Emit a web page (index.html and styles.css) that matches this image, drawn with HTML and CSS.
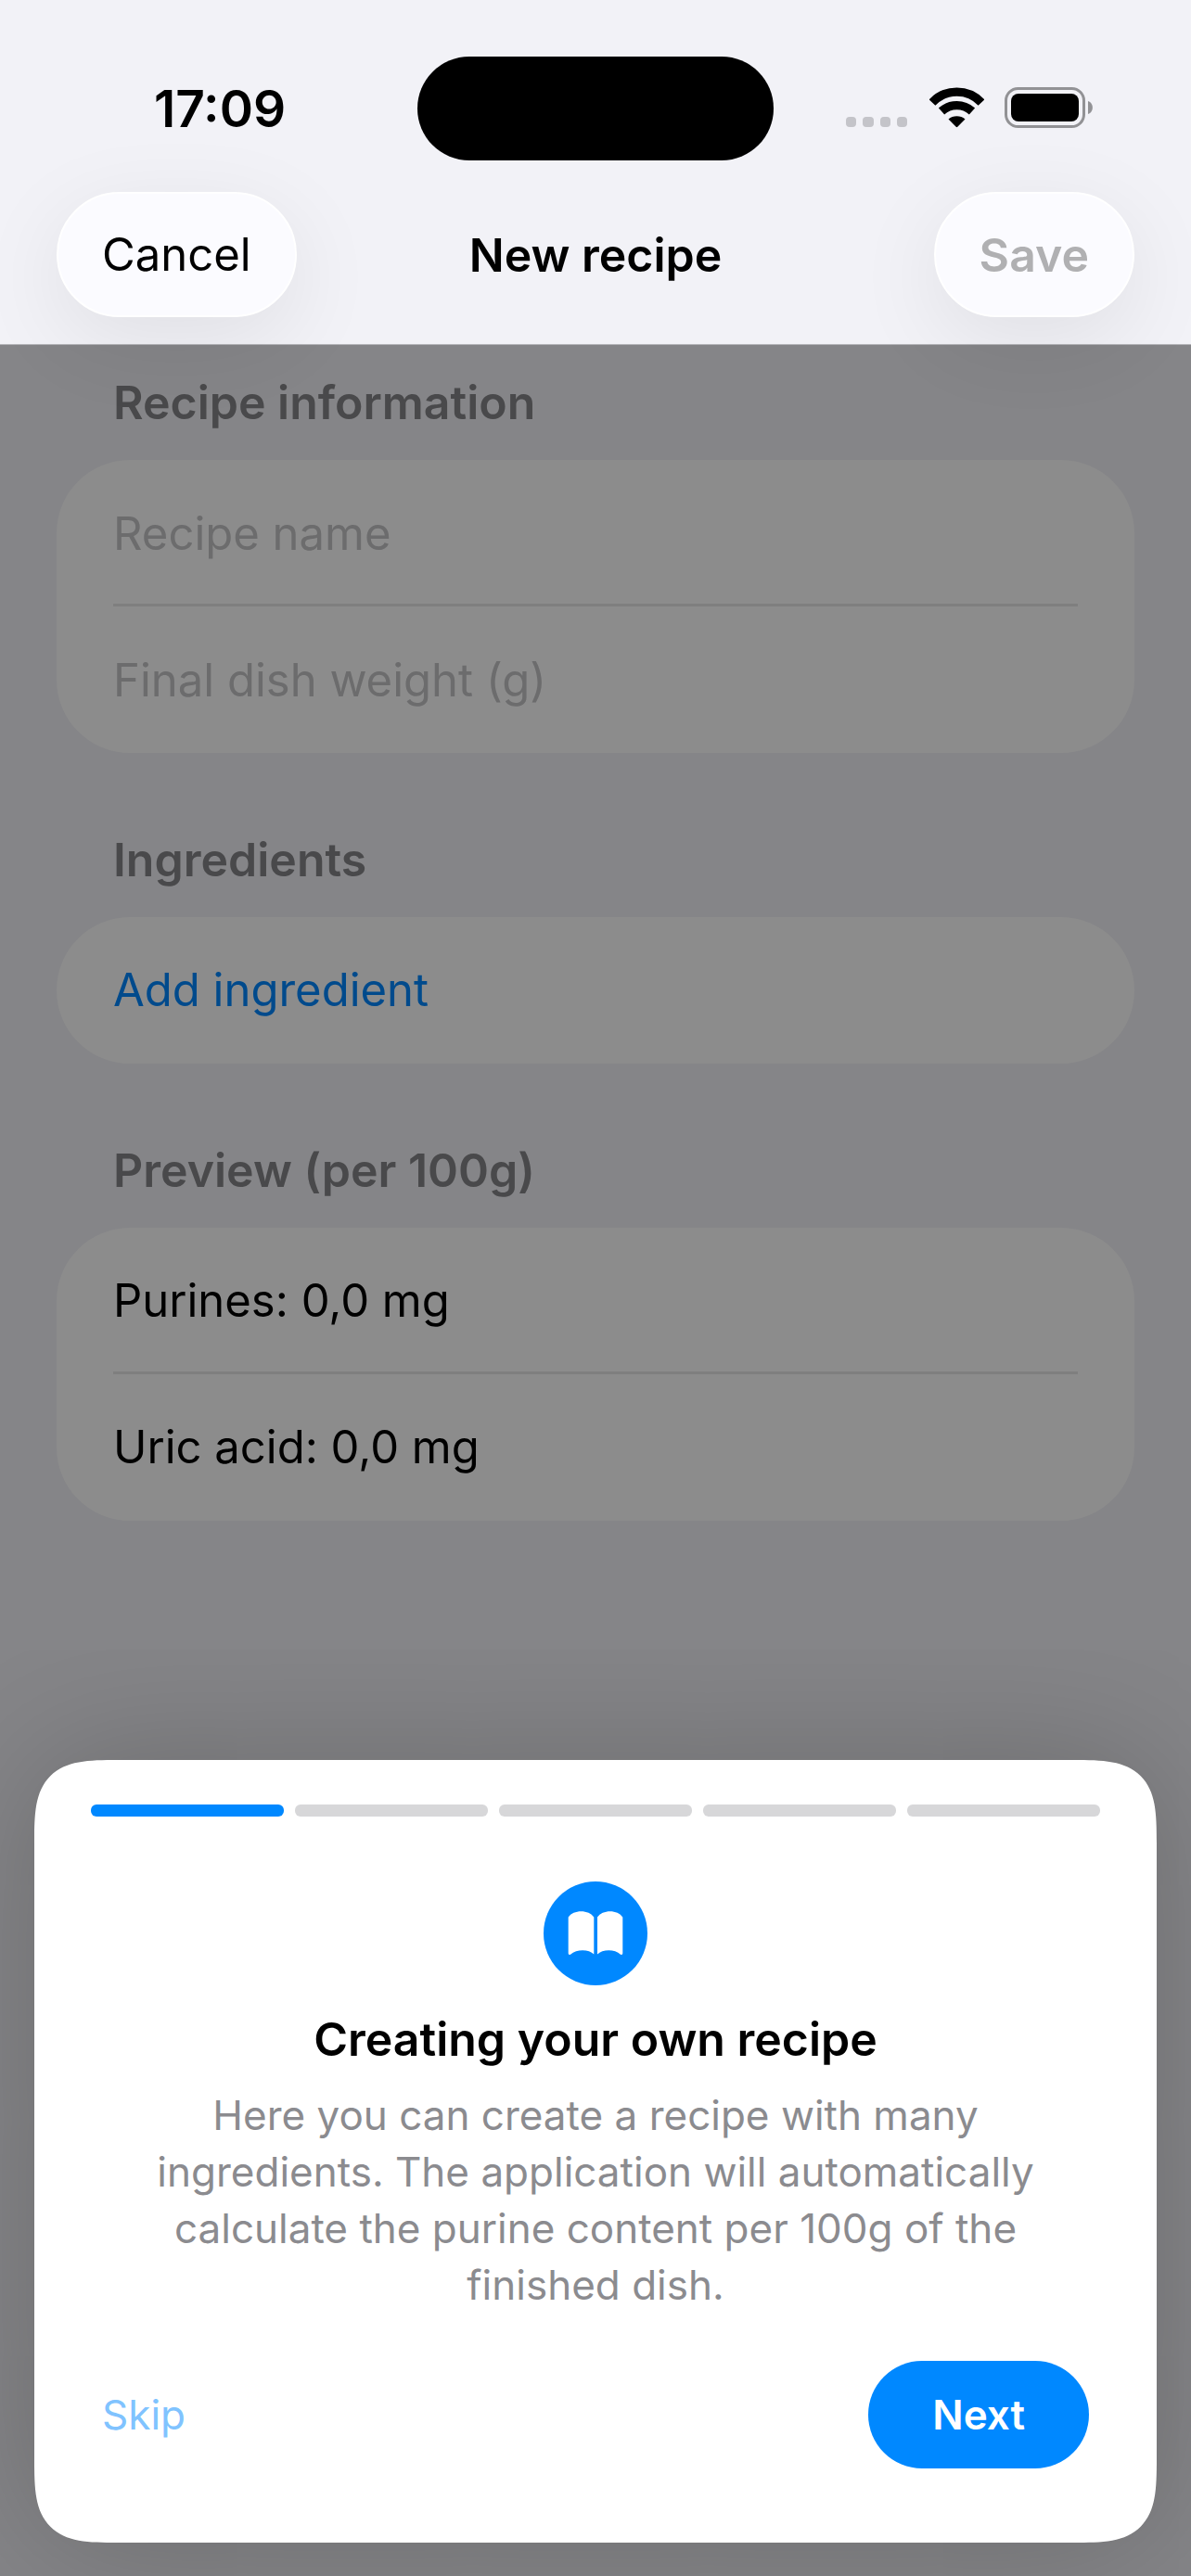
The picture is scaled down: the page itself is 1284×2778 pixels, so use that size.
FILE: index.html
```html
<!DOCTYPE html>
<html lang="en">
<head>
    <meta charset="UTF-8">
    <meta name="viewport" content="width=device-width, initial-scale=1.0">
    <title>New recipe</title>
    <link rel="stylesheet" href="styles.css">
</head>
<body>
    <header class="header">
        <div class="status-bar">
            <time class="status-time">17:09</time>
            <div class="island"></div>
            <div class="status-icons">
                <svg class="icon-signal" width="67" height="44" viewBox="0 0 67 44" fill="#c4c4c9" aria-hidden="true">
                    <rect x="0" y="32" width="11" height="11" rx="4"/>
                    <rect x="18" y="32" width="12" height="11" rx="4"/>
                    <rect x="37" y="32" width="11" height="11" rx="4"/>
                    <rect x="55" y="32" width="11" height="11" rx="4"/>
                </svg>
                <svg class="icon-wifi" width="59" height="44" viewBox="0 0 59 44" aria-hidden="true">
                    <path d="M3 16.500A36.500 36.500 0 0 1 56 16.500" fill="none" stroke="#000" stroke-width="9.300"/>
                    <path d="M13 26A24.500 24.500 0 0 1 46 26" fill="none" stroke="#000" stroke-width="9.300"/>
                    <path d="M20.500 34.500A14 14 0 0 1 38.500 34.500L30.300 42.800Q29.500 43.500 28.700 42.800Z"/>
                </svg>
                <svg class="icon-battery" width="96" height="44" viewBox="0 0 96 44" aria-hidden="true">
                    <rect x="1.500" y="1.500" width="84" height="41" rx="13" fill="none" stroke="#929295" stroke-width="3"/>
                    <rect x="7" y="7" width="73" height="30" rx="8"/>
                    <path d="M90 15C96.500 17 96.500 27 90 29Z" fill="#929295"/>
                </svg>
            </div>
        </div>
        <nav class="nav">
            <button type="button" class="pill">Cancel</button>
            <h1 class="title">New recipe</h1>
            <button type="button" class="pill pill-save" disabled>Save</button>
        </nav>
    </header>

    <main class="content">
        <form class="form">
            <section class="section">
                <h2 class="section-title">Recipe information</h2>
                <div class="card">
                    <input class="row" type="text" placeholder="Recipe name" aria-label="Recipe name">
                    <input class="row" type="text" inputmode="decimal" placeholder="Final dish weight (g)" aria-label="Final dish weight (g)">
                </div>
            </section>

            <section class="section">
                <h2 class="section-title">Ingredients</h2>
                <div class="card">
                    <button type="button" class="row row-action">Add ingredient</button>
                </div>
            </section>

            <section class="section">
                <h2 class="section-title">Preview (per 100g)</h2>
                <div class="card">
                    <p class="row">Purines: 0,0 mg</p>
                    <p class="row">Uric acid: 0,0 mg</p>
                </div>
            </section>
        </form>

        <!-- Onboarding tip over the dimmed form -->
        <div class="backdrop">
            <div class="tip" role="dialog" aria-labelledby="tipTitle">
                <div class="steps">
                    <span class="step step-active"></span>
                    <span class="step"></span>
                    <span class="step"></span>
                    <span class="step"></span>
                    <span class="step"></span>
                </div>
                <svg class="tip-icon" width="112" height="112" viewBox="0 0 112 112" aria-hidden="true">
                    <circle cx="56" cy="56" r="56" fill="#08f"/>
                    <path d="M26.700 38.500C32 30 49 30 54.300 38.500V78.500C49 73 36 72.500 29 78.700Q26.700 79.500 26.700 77.500Z" fill="#fff"/>
                    <path d="M85.300 38.500C80 30 63.500 30 58 38.500V78.500C63.500 73 76.500 72.500 83 78.700Q85.300 79.500 85.300 77.500Z" fill="#fff"/>
                </svg>
                <h2 class="tip-title" id="tipTitle">Creating your own recipe</h2>
                <p class="tip-text">Here you can create a recipe with many ingredients. The application will automatically calculate the purine content per 100g of the finished dish.</p>
                <div class="tip-actions">
                    <button type="button" class="skip">Skip</button>
                    <button type="button" class="next">Next</button>
                </div>
            </div>
        </div>
    </main>
</body>
</html>
```
FILE: styles.css
```css
* { box-sizing: border-box; }
body { margin: 0; min-height: 100vh; display: flex; flex-direction: column; background: #f2f2f7; color: #000; font-family: Inter, "Liberation Sans", sans-serif; font-size: 49px; line-height: 60px; }
h1, h2, p { margin: 0; }
h1, h2 { font-size: 50px; font-weight: 600; }
button, input { font: inherit; border: none; background: none; padding: 0; }

/* Header */
.header { position: relative; z-index: 2; padding-bottom: 30px; }
.header::before { content: ""; position: absolute; inset: 0; z-index: -1; background: #f2f2f7; border-bottom: 1px solid #b4b4b8; }
.status-bar { display: grid; grid-template-columns: 1fr 384px 1fr; align-items: center; padding-top: 61px; }
.status-time { padding-left: 166px; font-size: 55px; font-weight: 600; }
.island { height: 112px; border-radius: 56px; background: #000; }
.status-icons { display: flex; justify-content: flex-end; padding: 0 105px 2px 0; }
.icon-wifi { margin: 0 22px 0 23px; }
.nav { display: grid; grid-template-columns: 1fr auto 1fr; align-items: center; padding: 34px 61px 0; }
.pill { justify-self: start; height: 135px; padding: 0 47px; border: 2px solid #fff; border-radius: 68px; background: #fbfbff; color: #000; box-shadow: 0 24px 96px rgba(0, 0, 0, 0.08); }
.pill-save { justify-self: end; color: #b0b0b2; font-size: 50px; font-weight: 600; }

/* Form */
.content { position: relative; flex: 1; }
.form { display: flex; flex-direction: column; gap: 85px; padding: 32px 61px 60px; }
.section-title { padding: 0 61px; margin-bottom: 32px; color: #868689; }
.card { padding: 0 61px; border-radius: 79px; background: #fff; }
.row { display: block; width: 100%; height: 158px; padding: 3px 0; line-height: 152px; color: #000; text-align: left; }
.row:not(:last-child) { padding-bottom: 0; border-bottom: 3px solid #e8e8e8; }
.row::placeholder { color: #c5c5c7; opacity: 1; }
.row-action { color: #08f; }

/* Tip */
.backdrop { position: absolute; inset: 0; display: flex; align-items: flex-end; padding: 0 37px 36px; background: rgba(0, 0, 0, 0.45); }
.tip { width: 100%; display: flex; flex-direction: column; align-items: center; padding: 48px 61px 80px; border-radius: 66px; background: #fff; text-align: center; box-shadow: 0 0 150px rgba(0, 0, 0, 0.2); }
.steps { width: 100%; display: flex; gap: 12px; margin-bottom: 70px; }
.step { flex: 1; height: 13px; border-radius: 6px; background: #d7d7d9; }
.step-active { background: #08f; }
.tip-title { margin: 28px 0 22px; }
.tip-text { padding: 0 62px; color: #8b8b8f; font-size: 44px; line-height: 61px; }
.tip-actions { width: 100%; display: flex; justify-content: space-between; align-items: center; margin-top: 51px; padding: 0 12px; font-size: 44px; }
.skip { color: #80c3ff; }
.next { height: 116px; padding: 0 69px; border-radius: 58px; background: #08f; color: #fff; font-weight: 600; }

@supports (corner-shape: superellipse(1.7)) {
    .tip { border-radius: 90px; corner-shape: superellipse(1.7); }
}
```
